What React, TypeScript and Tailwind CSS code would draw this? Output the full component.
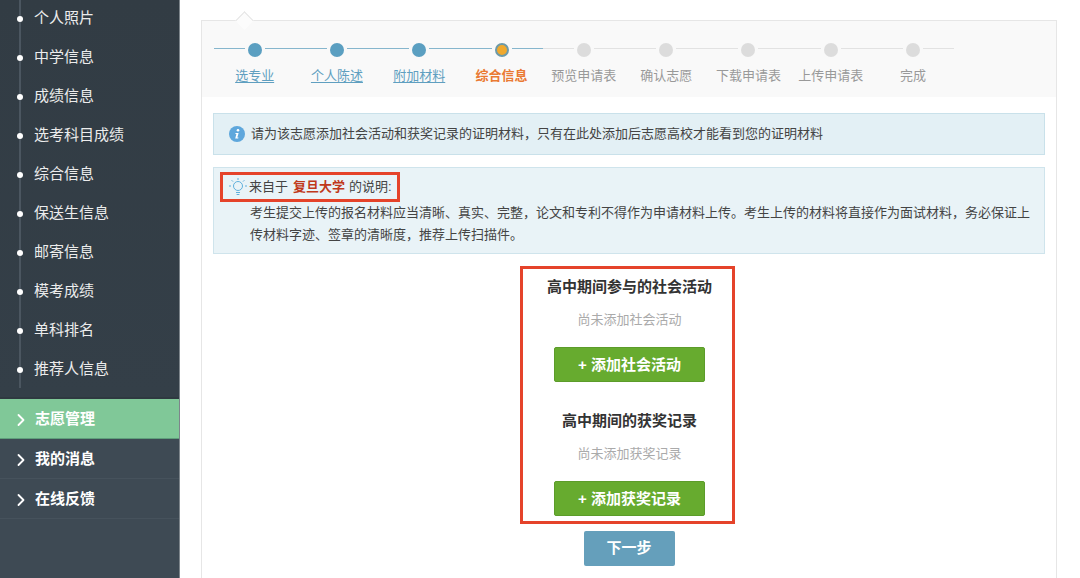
import React from 'react';
import { ChevronRight } from 'lucide-react';

const subItems = ['个人照片', '中学信息', '成绩信息', '选考科目成绩', '综合信息', '保送生信息', '邮寄信息', '模考成绩', '单科排名', '推荐人信息'];

const steps = [
  { label: '选专业', state: 'done' },
  { label: '个人陈述', state: 'done' },
  { label: '附加材料', state: 'done' },
  { label: '综合信息', state: 'active' },
  { label: '预览申请表', state: 'todo' },
  { label: '确认志愿', state: 'todo' },
  { label: '下载申请表', state: 'todo' },
  { label: '上传申请表', state: 'todo' },
  { label: '完成', state: 'todo' },
];

const Sidebar = () => (
  <aside className="w-[180px] h-[578px] shrink-0 flex flex-col bg-[#3e4a54] border-r border-[#7d858b] overflow-hidden">
    <div className="h-[399px] shrink-0 bg-gradient-to-b from-[#323c44] to-[#343f48] border-b-2 border-[#2f3940]">
      <div className="ml-[19px] w-[2px] h-[389px] bg-[#4b5660]">
        <ul className="-mt-[1px]">
          {subItems.map((item) => (
            <li key={item} className="h-[39px] flex items-center whitespace-nowrap">
              <span className="-ml-[2px] w-[6px] h-[6px] rounded-full bg-white shrink-0" />
              <span className="ml-[11px] text-[15px] text-[#ececec]">{item}</span>
            </li>
          ))}
        </ul>
      </div>
    </div>
    <div className="h-[40px] shrink-0 flex items-center pt-[2px] bg-[#80c898] border-b border-[#5f9f7c] text-white">
      <ChevronRight className="w-[20px] h-[20px] ml-[11px]" strokeWidth={2.2} />
      <span className="ml-[4px] text-[15px] font-bold">志愿管理</span>
    </div>
    <div className="h-[40px] shrink-0 flex items-center pt-[2px] border-b border-[#46525c] text-white">
      <ChevronRight className="w-[20px] h-[20px] ml-[11px]" strokeWidth={2.2} />
      <span className="ml-[4px] text-[15px] font-bold">我的消息</span>
    </div>
    <div className="h-[40px] shrink-0 flex items-center pt-[2px] border-b border-[#46525c] text-white">
      <ChevronRight className="w-[20px] h-[20px] ml-[11px]" strokeWidth={2.2} />
      <span className="ml-[4px] text-[15px] font-bold">在线反馈</span>
    </div>
  </aside>
);

const StepDot = ({ state }: { state: string }) => {
  if (state === 'active') {
    return <span className="mx-[3px] w-[14px] h-[14px] shrink-0 rounded-full bg-[#f0a92e] border-2 border-[#6d9aa8]" />;
  }
  if (state === 'done') {
    return <span className="mx-[3px] w-[14px] h-[14px] shrink-0 rounded-full bg-[#5b9fc1]" />;
  }
  return <span className="mx-[3px] w-[14px] h-[14px] shrink-0 rounded-full bg-[#dcdcdc]" />;
};

const Steps = () => (
  <div className="relative h-[76px] bg-[#f9f9f9] pl-[11.5px] pt-[22px]">
    <div className="absolute -top-[7px] left-[36px] w-[13px] h-[13px] rotate-45 bg-[#fcfcfc] border-l border-t border-[#e4e4e4]" />
    <div className="flex">
      {steps.map((step) => (
        <div key={step.label} className="w-[82.3px] shrink-0 flex flex-col items-center">
          <div className="w-full h-[14px] flex items-start">
            <span className={step.state === 'todo' ? 'flex-1 h-px mt-[5px] bg-[#e2e2e2]' : 'flex-1 h-px mt-[5px] bg-[#86b6cd]'} />
            <StepDot state={step.state} />
            <span className={step.state === 'todo' ? 'flex-1 h-px mt-[5px] bg-[#e2e2e2]' : 'flex-1 h-px mt-[5px] bg-[#86b6cd]'} />
          </div>
          <span
            className={
              step.state === 'done'
                ? 'mt-[9px] text-[13px] leading-[20px] whitespace-nowrap text-[#5f9fc0] underline underline-offset-2'
                : step.state === 'active'
                  ? 'mt-[9px] text-[13px] leading-[20px] whitespace-nowrap font-bold text-[#ea7a33]'
                  : 'mt-[9px] text-[13px] leading-[20px] whitespace-nowrap text-[#999999]'
            }
          >
            {step.label}
          </span>
        </div>
      ))}
    </div>
  </div>
);

const InfoIcon = () => (
  <svg viewBox="0 0 16 16" className="w-[16px] h-[16px] shrink-0">
    <circle cx="8" cy="8" r="8" fill="#5ea7dc" />
    <circle cx="9" cy="4.2" r="1.3" fill="#fff" />
    <path d="M6.6 7h3l-1.3 4.6h1.2l-.3 1H6.2l1.2-4.6H6.3z" fill="#fff" />
  </svg>
);

const BulbIcon = () => (
  <svg viewBox="0 0 20 20" className="w-[20px] h-[20px] shrink-0" fill="none" stroke="#5fb0dc" strokeWidth="1">
    <circle cx="10" cy="9" r="4.5" />
    <path d="M8 15.5h4M8.6 17.5h2.8" />
    <path d="M10 1v2M3.6 3.2l1.4 1.4M16.4 3.2L15 4.6M1 9h2M17 9h2" />
  </svg>
);

const Section = ({ title, empty, action }: { title: string; empty: string; action: string }) => (
  <div className="flex flex-col items-center">
    <h3 className="text-[15px] leading-[22px] font-bold text-[#333333]">{title}</h3>
    <p className="mt-[12px] text-[13px] leading-[20px] text-[#aaaaaa]">{empty}</p>
    <button className="mt-[17px] w-[151px] h-[35px] pt-[1px] rounded-[2px] bg-[#67ab2f] border border-[#5c9c2a] text-white text-[15px] font-bold">
      + {action}
    </button>
  </div>
);

export default function App() {
  return (
    <div
      className="w-[1080px] h-[578px] overflow-hidden flex bg-white"
      style={{ fontFamily: '"Helvetica Neue", "Liberation Sans", "Noto Sans CJK SC", sans-serif' }}
    >
      <Sidebar />
      <main className="flex-1 pl-[21px] pr-[23px] pt-[20px]">
        <div className="h-[600px] border border-[#e6e6e6]">
          <Steps />
          <div className="px-[11px] pt-[16px]">
            <div className="h-[42px] flex items-center pl-[15px] bg-[#e3f0f5] border border-[#c9e1ea] text-[13px] text-[#444444]">
              <InfoIcon />
              <span className="ml-[6px]">请为该志愿添加社会活动和获奖记录的证明材料，只有在此处添加后志愿高校才能看到您的证明材料</span>
            </div>
            <div className="mt-[12px] h-[87px] bg-[#e9f3f7] border border-[#cfe4ec] pl-[8px] pt-[4px] text-[#444444]">
              <div className="flex items-center w-fit h-[30px] pl-[5px] pr-[5px] border-[3px] border-[#e5432a] -ml-[2px] text-[13px]">
                <BulbIcon />
                <span className="ml-[1px]">来自于</span>
                <span className="ml-[5px] font-bold text-[#c0391b]">复旦大学</span>
                <span className="ml-[4px]">的说明:</span>
              </div>
              <p className="ml-[28px] mr-[12px] text-[13px] leading-[22px]">
                考生提交上传的报名材料应当清晰、真实、完整，论文和专利不得作为申请材料上传。考生上传的材料将直接作为面试材料，务必保证上传材料字迹、签章的清晰度，推荐上传扫描件。
              </p>
            </div>
            <div className="mt-[12px] ml-[307px] w-[215px] h-[258px] border-[3px] border-[#e5432a] pt-[7px] pl-[4px]">
              <Section title="高中期间参与的社会活动" empty="尚未添加社会活动" action="添加社会活动" />
              <div className="mt-[28px]">
                <Section title="高中期间的获奖记录" empty="尚未添加获奖记录" action="添加获奖记录" />
              </div>
            </div>
            <div className="mt-[7px] flex justify-center">
              <button className="w-[91px] h-[35px] rounded-[2px] bg-[#659fbb] text-white text-[15px] font-bold">下一步</button>
            </div>
          </div>
        </div>
      </main>
    </div>
  );
}
